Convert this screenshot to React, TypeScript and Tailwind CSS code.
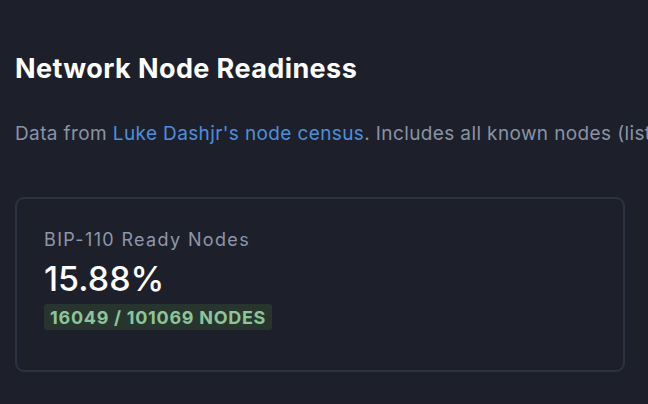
import React from "react";

export default function App() {
  return (
    <div
      className="h-[404px] w-full bg-[#1d202a] px-[15px] pt-[49px] overflow-hidden"
      style={{ fontFamily: "Inter, 'Noto Sans', sans-serif" }}
    >
      <h1 className="text-[27px] leading-[40px] font-bold tracking-[0.015em] text-white">Network Node Readiness</h1>
      <p className="mt-[31px] text-[19px] leading-[28px] tracking-[0.02em] text-[#8a93a6] whitespace-nowrap">
        Data from <span className="text-[#4d8fdc]">Luke Dashjr's node census</span>. Includes all known nodes (listening and non-listening).
      </p>
      <div className="mt-[49px] w-[610px] rounded-[9px] border-2 border-[#2d3242] px-[27px] pt-[29px] pb-[40px]">
        <div className="text-[18px] leading-[24px] tracking-[0.075em] text-[#8d97a9]">BIP-110 Ready Nodes</div>
        <div className="mt-[6px] text-[34px] leading-[41px] font-medium text-white">15.88%</div>
        <div className="mt-[5px] inline-flex h-[26px] items-center rounded-[3px] bg-[#28352f] px-[6px] text-[18px] font-bold tracking-[0.04em] text-[#8cc59a]">
          16049 / 101069 NODES
        </div>
      </div>
    </div>
  );
}
